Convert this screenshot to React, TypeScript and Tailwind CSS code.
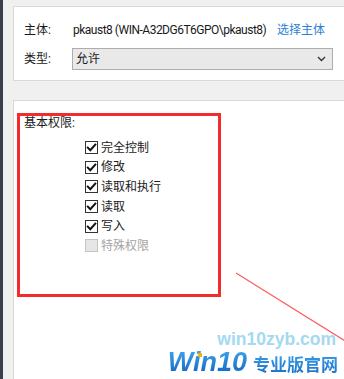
import React from "react";

const rows: { label: string; checked: boolean; disabled?: boolean }[] = [
  { label: "完全控制", checked: true },
  { label: "修改", checked: true },
  { label: "读取和执行", checked: true },
  { label: "读取", checked: true },
  { label: "写入", checked: true },
  { label: "特殊权限", checked: false, disabled: true },
];

function Check({ checked, disabled }: { checked: boolean; disabled?: boolean }) {
  return (
    <div
      className={
        disabled
          ? "w-[13px] h-[13px] border border-[#c4c4c4] bg-[#e6e6e6] shrink-0"
          : "w-[13px] h-[13px] border border-[#333333] bg-white shrink-0 flex items-center justify-center"
      }
    >
      {checked && (
        <svg width="11" height="11" viewBox="0 0 11 11">
          <path d="M1.8 5.6 L4.3 8.2 L9.3 2.6" fill="none" stroke="#111" strokeWidth="2" strokeLinecap="square" />
        </svg>
      )}
    </div>
  );
}

export default function App() {
  return (
    <div className="relative w-[344px] h-[379px] overflow-hidden bg-[#f0f0f0] flex font-['Roboto','Noto_Sans_CJK_SC',sans-serif] text-[12px] text-[#1a1a1a]">
      <div className="w-[3px] bg-[#3b3e4b] shrink-0" />
      <div className="flex-1 flex flex-col pl-[10px] pt-[6px]">
        <div className="h-[75px] -mr-[4px] border border-[#d9d9d9] bg-white pl-[10px] pt-[13px] shrink-0">
          <div className="flex items-center h-[20px]">
            <div className="w-[49px]">主体:</div>
            <div className="w-[204px] whitespace-nowrap tracking-[-0.5px]">pkaust8 (WIN-A32DG6T6GPO\pkaust8)</div>
            <div className="text-[#2b7fd6]">选择主体</div>
          </div>
          <div className="flex items-center mt-[8px]">
            <div className="w-[48px]">类型:</div>
            <div className="w-[261px] h-[22px] border border-[#adadad] bg-[#e9e9e9] flex items-center pl-[3px] pr-[6px] justify-between">
              <span>允许</span>
              <svg width="9" height="6" viewBox="0 0 9 6">
                <path d="M1 1 L4.5 4.5 L8 1" fill="none" stroke="#333" strokeWidth="1.4" />
              </svg>
            </div>
          </div>
        </div>
        <div className="mt-[19px] flex-1 -mr-[4px] -mb-[4px] border border-[#d9d9d9] bg-white pl-[3px] pt-[12px]">
          <div className="w-[204px] h-[184px] border-[3px] border-[#f42b2b] pl-[4px]">
            <div className="h-[14px] leading-[14px]">基本权限:</div>
            <div className="mt-[8px] ml-[61px] flex flex-col">
              {rows.map((r) => (
                <div key={r.label} className="h-[19.6px] flex items-center gap-[3px]">
                  <Check checked={r.checked} disabled={r.disabled} />
                  <span className={r.disabled ? "text-[#a3a3a3]" : ""}>{r.label}</span>
                </div>
              ))}
            </div>
          </div>
        </div>
      </div>

      <svg className="absolute inset-0 pointer-events-none" width="344" height="379">
        <line x1="236" y1="273" x2="350" y2="344" stroke="#ff5a5a" strokeWidth="1.2" />
      </svg>

      <div className="absolute left-[160px] top-[329px] w-[178px] flex flex-col items-end pointer-events-none">
        <div className="font-['Liberation_Sans',sans-serif] font-bold text-[17.5px] leading-[20px] text-[#a4d9f1] pr-[2px]">
          win10zyb.com
        </div>
        <div className="flex items-end h-[26px]">
          <span className="font-['Liberation_Sans',sans-serif] italic font-bold text-[27px] leading-[26px] bg-linear-to-b from-[#3fa6ee] to-[#1565c0] bg-clip-text text-transparent pr-[6px]">
            Win10
          </span>
          <span className="font-['Noto_Sans_CJK_SC',sans-serif] font-bold text-[17px] leading-[22px] bg-linear-to-b from-[#3aa0ea] to-[#1c70c8] bg-clip-text text-transparent">
            专业版官网
          </span>
        </div>
      </div>
      <div className="absolute left-[198px] top-[353px] w-[4px] h-[4px] bg-[#f5b400] pointer-events-none" />
    </div>
  );
}
